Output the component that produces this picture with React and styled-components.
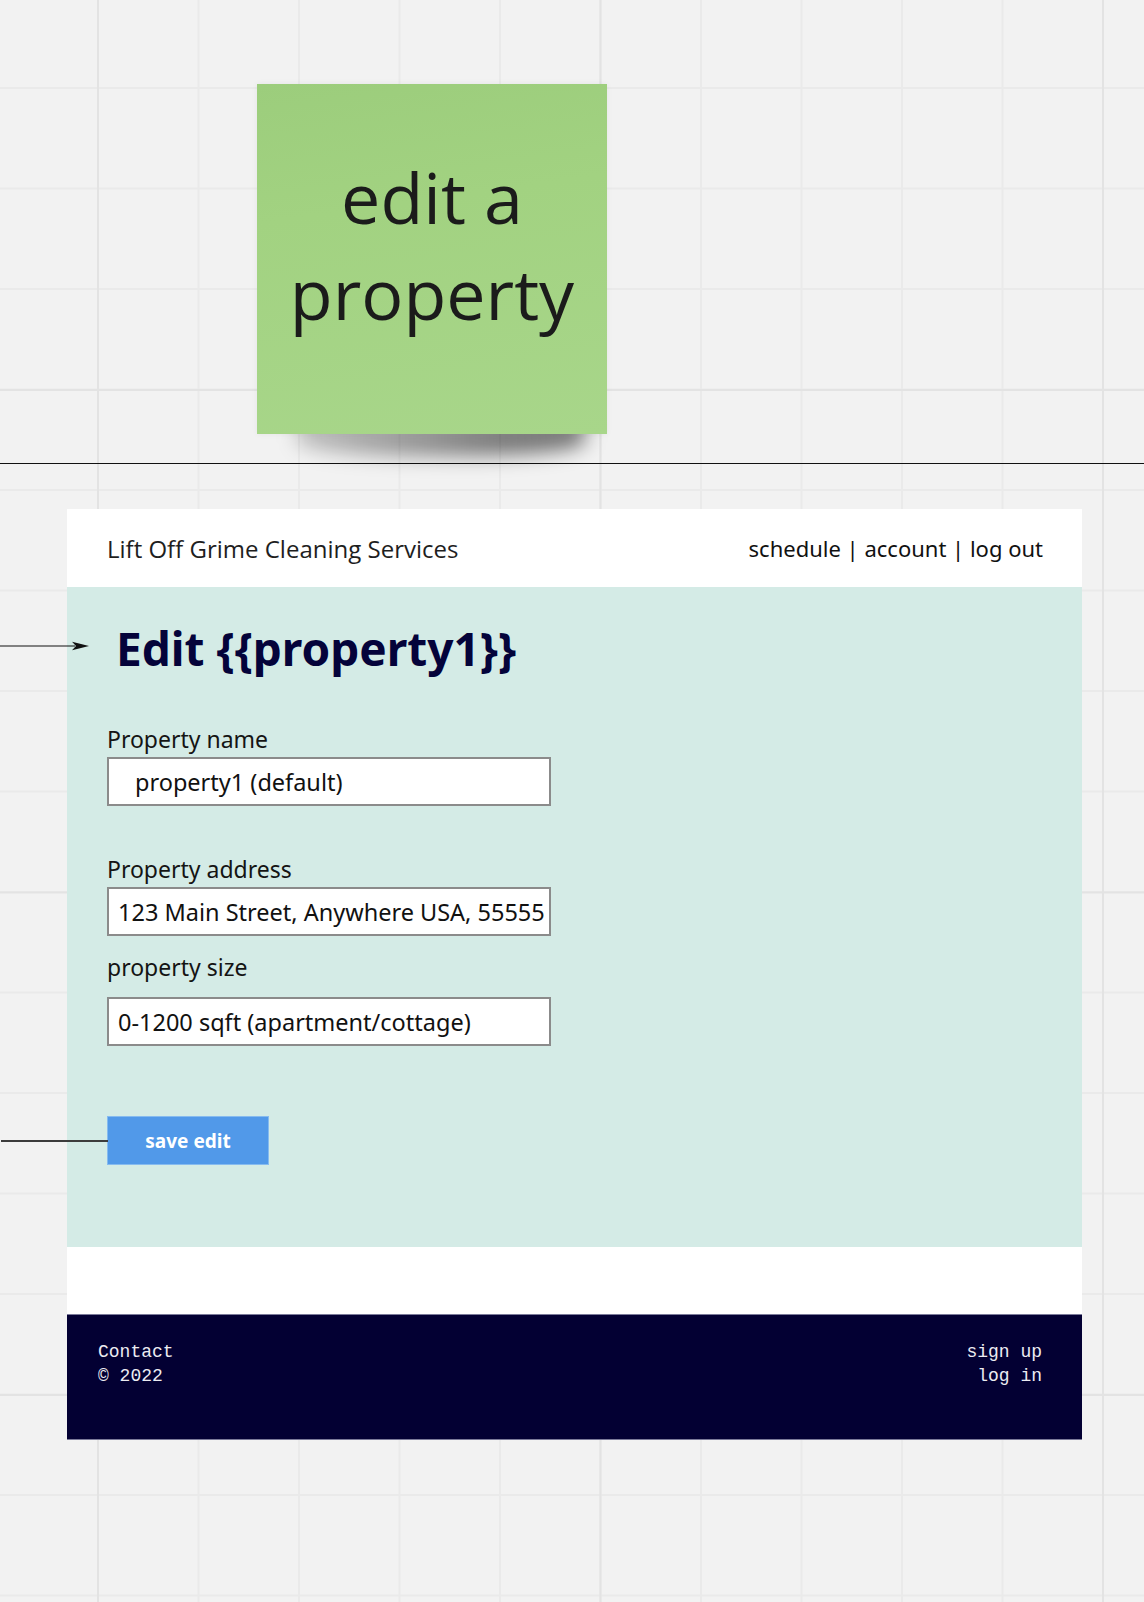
import React from 'react';
import styled, { createGlobalStyle } from 'styled-components';

const GlobalStyle = createGlobalStyle`
  html, body {
    margin: 0;
    padding: 0;
  }
  body {
    width: 1144px;
    min-height: 1602px;
    overflow: hidden;
    background-color: #f2f2f2;
    background-image:
      linear-gradient(to right, #e3e3e3 2px, transparent 2px),
      linear-gradient(to bottom, #e3e3e3 2px, transparent 2px),
      linear-gradient(to right, #eaeaea 1.5px, transparent 1.5px),
      linear-gradient(to bottom, #eaeaea 1.5px, transparent 1.5px);
    background-size: 502.5px 502.5px, 502.5px 502.5px, 100.5px 100.5px, 100.5px 100.5px;
    background-position: 97px 0, 0 389px, 97px 0, 0 87px;
    font-family: "Noto Sans", sans-serif;
  }
`;

const Board = styled.div`
  display: flex;
  flex-direction: column;
  width: 1144px;
  height: 1602px;
`;

const NoteRow = styled.div`
  padding: 84px 0 0 257px;
  isolation: isolate;
`;

const Sticky = styled.div`
  position: relative;
  width: 350px;
  height: 350px;
  box-sizing: border-box;
  padding-bottom: 27px;
  display: flex;
  align-items: center;
  justify-content: center;
  background: linear-gradient(172deg, #9ccd7c 0%, #a2d281 35%, #a8d68a 100%);
  box-shadow: 0 0 6px rgba(0, 0, 0, 0.06);
  font-family: "Open Sans", sans-serif;
  font-size: 70px;
  line-height: 1.362;
  color: #1b1b1b;
  text-align: center;

  &::after {
    content: '';
    position: absolute;
    left: 40px;
    right: 22px;
    bottom: -22px;
    height: 34px;
    background: linear-gradient(to right, rgba(0, 0, 0, 0.22), rgba(0, 0, 0, 0.5) 70%, rgba(0, 0, 0, 0.55));
    filter: blur(10px);
    border-radius: 0 0 45% 45%;
    z-index: -1;
  }
`;

const Divider = styled.hr`
  margin: 29px 0 0;
  border: 0;
  height: 1px;
  background: #111;
`;

const Card = styled.div`
  margin: 45px 0 0 67px;
  width: 1015px;
  display: flex;
  flex-direction: column;
`;

const Header = styled.header`
  height: 78px;
  box-sizing: border-box;
  padding: 0 39px 0 40px;
  display: flex;
  align-items: center;
  justify-content: space-between;
  background: #fff;
`;

const Brand = styled.div`
  font-family: "Open Sans", sans-serif;
  font-size: 24px;
  color: #1e1e1e;
`;

const Nav = styled.nav`
  font-family: "Noto Sans", sans-serif;
  font-size: 22px;
  color: #111;
`;

const Main = styled.main`
  height: 660px;
  box-sizing: border-box;
  padding: 32px 40px 0;
  display: flex;
  flex-direction: column;
  align-items: flex-start;
  background: #d4ebe6;
`;

const Title = styled.h1`
  position: relative;
  margin: 0 0 0 9px;
  font-family: "Noto Sans", sans-serif;
  font-weight: 700;
  font-size: 46px;
  line-height: 58px;
  color: #04033a;
`;

const Connector = styled.svg`
  position: absolute;
  left: -116px;
  top: 22px;
`;

const Field = styled.div`
  display: flex;
  flex-direction: column;
  gap: ${p => p.$gap}px;
  margin-top: ${p => p.$top}px;
`;

const Label = styled.label`
  font-size: 23px;
  line-height: 28px;
  color: #141414;
`;

const TextInput = styled.input`
  width: 444px;
  height: 49px;
  box-sizing: border-box;
  margin: 0;
  padding: 0 0 0 ${p => p.$indent}px;
  border: 2px solid #8b8b8b;
  border-radius: 0;
  background: #fff;
  font-family: "Noto Sans", sans-serif;
  font-size: 23.5px;
  color: #111;
  outline: none;
`;

const SaveButton = styled.button`
  position: relative;
  margin-top: 70px;
  width: 162px;
  height: 49px;
  box-sizing: border-box;
  border: 1px solid #86bbef;
  border-radius: 0;
  background: #5199e9;
  color: #fff;
  font-family: "Noto Sans", sans-serif;
  font-weight: 700;
  font-size: 19px;
  cursor: pointer;

  &::before {
    content: '';
    position: absolute;
    right: 100%;
    top: 23px;
    width: 107px;
    height: 1.5px;
    background: #3c3c3c;
  }
`;

const Spacer = styled.div`
  height: 67px;
  background: #fff;
`;

const Footer = styled.footer`
  height: 126px;
  box-sizing: border-box;
  padding: 25px 40px 0 31px;
  display: flex;
  justify-content: space-between;
  background: #030033;
  border-top: 1px solid #7b7a99;
  border-bottom: 1px solid #7b7a99;
  font-family: "Liberation Mono", monospace;
  font-size: 18px;
  line-height: 24px;
  color: #ececf2;
`;

const FooterCol = styled.div`
  display: flex;
  flex-direction: column;
  align-items: ${p => (p.$right ? 'flex-end' : 'flex-start')};
`;

export default function App() {
  return (
    <>
      <GlobalStyle />
      <Board>
        <NoteRow>
          <Sticky>
            <div>
              edit a<br />
              property
            </div>
          </Sticky>
        </NoteRow>
        <Divider />
        <Card>
          <Header>
            <Brand>Lift Off Grime Cleaning Services</Brand>
            <Nav>schedule | account | log out</Nav>
          </Header>
          <Main>
            <Title>
              <Connector width="90" height="10" viewBox="0 0 90 10">
                <line x1="0" y1="5" x2="75" y2="5" stroke="#111" strokeWidth="1.2" />
                <path d="M72 0.8 L89 5 L72 9.2 L76 5 Z" fill="#111" />
              </Connector>
              Edit {'{{property1}}'}
            </Title>
            <Field $top={48} $gap={4}>
              <Label>Property name</Label>
              <TextInput $indent={26} defaultValue="property1 (default)" />
            </Field>
            <Field $top={49} $gap={4}>
              <Label>Property address</Label>
              <TextInput $indent={9} defaultValue="123 Main Street, Anywhere USA, 55555" />
            </Field>
            <Field $top={17} $gap={16}>
              <Label>property size</Label>
              <TextInput $indent={9} defaultValue="0-1200 sqft (apartment/cottage)" />
            </Field>
            <SaveButton>save edit</SaveButton>
          </Main>
          <Spacer />
          <Footer>
            <FooterCol>
              <span>Contact</span>
              <span>© 2022</span>
            </FooterCol>
            <FooterCol $right>
              <span>sign up</span>
              <span>log in</span>
            </FooterCol>
          </Footer>
        </Card>
      </Board>
    </>
  );
}
